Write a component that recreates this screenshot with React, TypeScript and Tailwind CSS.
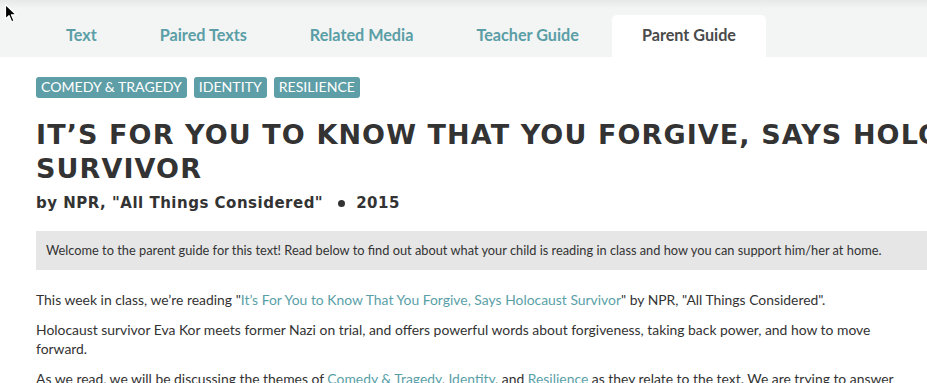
import React from "react";

const TABS = ["Text", "Paired Texts", "Related Media", "Teacher Guide", "Parent Guide"];
const TAGS = ["Comedy & Tragedy", "Identity", "Resilience"];

const heading = { fontFamily: '"DejaVu Sans", "Liberation Sans", sans-serif' };
const body = { fontFamily: 'Lato, "Liberation Sans", sans-serif' };

function Cursor() {
  return (
    <svg className="absolute left-[4px] top-[3px]" width="14" height="21" viewBox="0 0 14 21">
      <path
        d="M1.5 1.5 L1.5 16 L5 12.6 L7.6 18.8 L10 17.8 L7.4 11.8 L12.2 11.8 Z"
        fill="#000"
        stroke="#fff"
        strokeWidth="1.2"
        strokeLinejoin="round"
      />
    </svg>
  );
}

export default function App() {
  return (
    <div className="relative h-[383px] w-[927px] overflow-hidden bg-white text-[#333]" style={body}>
      <nav className="flex h-[57px] items-end gap-[3px] bg-gradient-to-b from-[#e7e8e8] via-[#f3f4f4] via-[15%] to-[#f3f4f4] pl-[36px]">
        {TABS.map((t) => {
          const active = t === "Parent Guide";
          return (
            <div
              key={t}
              className={
                active
                  ? "flex h-[42px] items-center rounded-t-[5px] bg-white px-[30px] pb-[2px] text-[16.2px] font-bold text-[#4a4a4a]"
                  : "flex h-[42px] items-center px-[30px] pb-[2px] text-[16.2px] font-bold text-[#5a9ea6]"
              }
            >
              {t}
            </div>
          );
        })}
      </nav>
      <Cursor />

      <main className="w-[1100px] pl-[36px]">
        <div className="mt-[20px] flex gap-[7px]">
          {TAGS.map((t) => (
            <span
              key={t}
              className="flex h-[21px] items-center rounded-[3px] bg-[#5e9ea6] px-[5px] text-[14.1px] uppercase leading-none text-white"
            >
              {t}
            </span>
          ))}
        </div>

        <h1
          className="mt-[20px] w-[1060px] text-[27px] font-bold uppercase leading-[34px] tracking-[1.1px] text-[#333]"
          style={heading}
        >
          It’s For You to Know That You Forgive, Says Holocaust Survivor
        </h1>

        <p className="mt-[6px] text-[15px] font-bold leading-[22px] tracking-[0.5px] text-[#333]" style={heading}>
          by NPR, "All Things Considered"
          <span className="ml-[15px] mr-[11px] inline-block h-[7px] w-[7px] rounded-full bg-[#333] align-middle" />
          2015
        </p>

        <div className="mt-[17px] flex h-[39px] items-center bg-[#e6e6e6] pl-[10px] text-[12.8px] text-[#333]">
          Welcome to the parent guide for this text! Read below to find out about what your child is reading in class and how you can support him/her at home.
        </div>

        <div className="mt-[20px] max-w-[870px] space-y-[10px] text-[13.9px] leading-[19.5px] text-[#333]">
          <p>
            This week in class, we’re reading "
            <span className="text-[#5a9fa8]">It’s For You to Know That You Forgive, Says Holocaust Survivor</span>" by NPR, "All Things Considered".
          </p>
          <p>
            Holocaust survivor Eva Kor meets former Nazi on trial, and offers powerful words about forgiveness, taking back power, and how to move forward.
          </p>
          <p>
            As we read, we will be discussing the themes of <span className="text-[#5a9fa8]">Comedy &amp; Tragedy</span>,{" "}
            <span className="text-[#5a9fa8]">Identity</span>, and <span className="text-[#5a9fa8]">Resilience</span> as they relate to the text. We are trying to answer the following questions.
          </p>
        </div>
      </main>
    </div>
  );
}
